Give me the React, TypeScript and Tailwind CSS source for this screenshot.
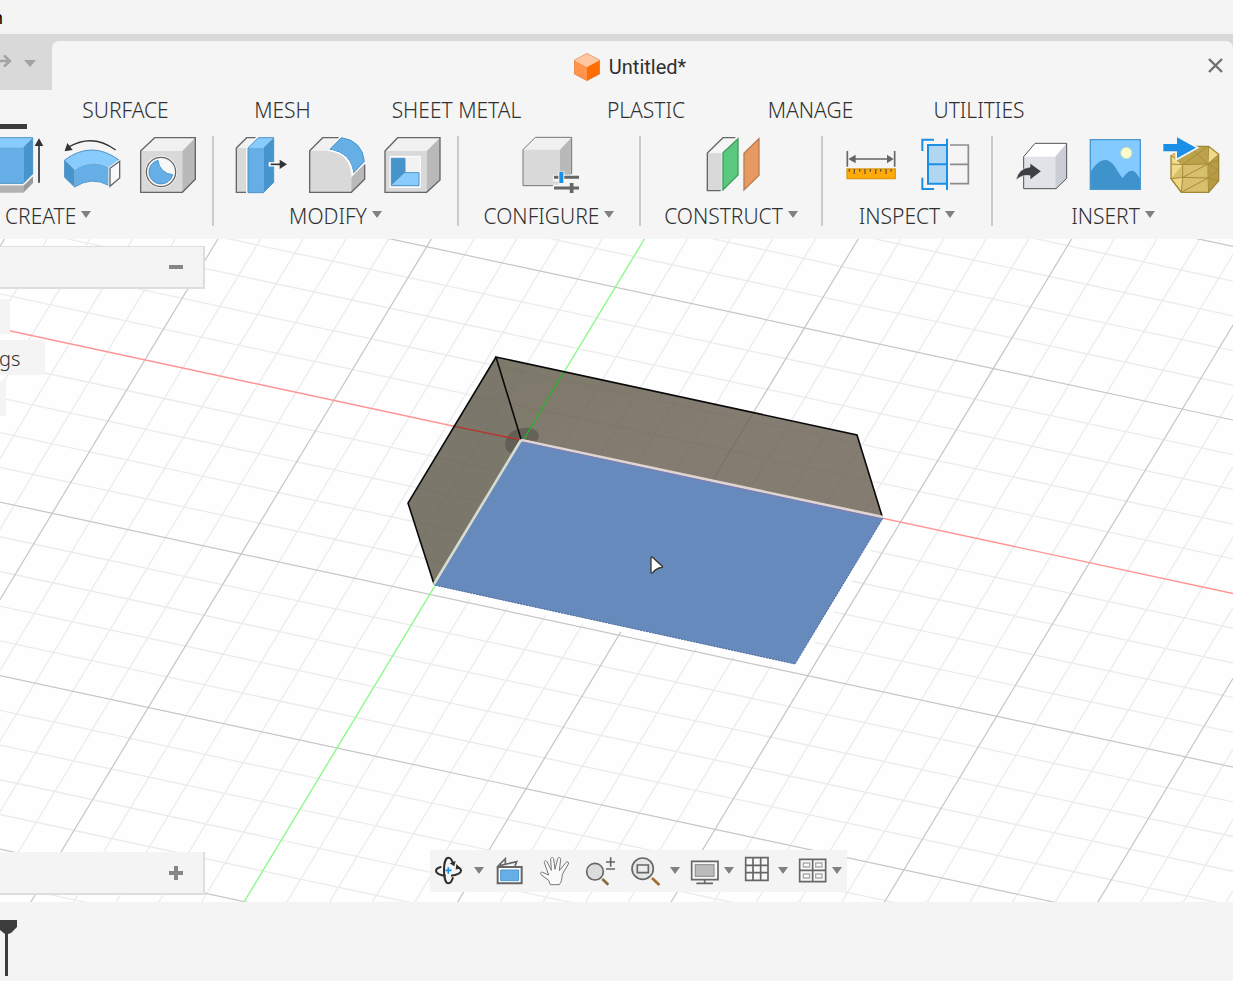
import type { ReactNode } from "react";

const O = { x: 522.8, y: 440.9 };
const U = { x: 188.9, y: 40.6 };
const V = { x: -92.8, y: 153.6 };

const steps = Array.from({ length: 81 }, (_, i) => i - 40);

function Caret({ className = "text-[#808080]" }: { className?: string }) {
  return (
    <svg viewBox="0 0 10 7" className={`h-[7px] w-[10px] shrink-0 ${className}`}>
      <path d="M0 0H10L5 7Z" fill="currentColor" />
    </svg>
  );
}

/* RIBBON ICONS */

function RibbonIcon({ label, box, children }: { label: string; box: string; children: ReactNode }) {
  return (
    <button type="button" aria-label={label} className="shrink-0">
      <svg viewBox={box} className="h-[60px] w-[60px] overflow-visible">
        {children}
      </svg>
    </button>
  );
}

function Extrude() {
  return (
    <RibbonIcon label="Extrude" box="-42 408 180 180">
      <path d="M-42 556H70V578H-42Z" fill="#b2b2b2" />
      <path d="M70 556L99 528V549L70 578Z" fill="#9a9a9a" />
      <path d="M-42 442L-12 413H98L70 442Z" fill="#88cbfd" />
      <path d="M-42 442H70V550H-42Z" fill="#66afe6" />
      <path d="M70 442L98 413V522L70 550Z" fill="#4794cd" />
      <path d="M-12 413H98V522L70 550H-42" fill="none" stroke="#4c93c6" strokeWidth="3" />
      <path d="M-42 554H71L99 526" fill="none" stroke="#f5f5f5" strokeWidth="4" />
      <path d="M117 548V432" stroke="#333" strokeWidth="5" />
      <path d="M104 438L117 415L130 438Z" fill="#333" />
    </RibbonIcon>
  );
}

function Bend() {
  return (
    <RibbonIcon label="Revolve" box="186 408 180 180">
      <path d="M347 450Q278 400 208 440" fill="none" stroke="#333" strokeWidth="4" />
      <path d="M194 454L202 429L218 450Z" fill="#333" />
      <path d="M194 480Q275 420 357 480L327 502Q275 474 224 509Z" fill="#88cbfd" />
      <path d="M224 509Q275 474 326 502V556Q275 528 224 561Z" fill="#66afe6" />
      <path d="M194 480L224 509V561L194 532Z" fill="#4794cd" />
      <path d="M194 532V480Q275 420 357 480M326 556Q275 528 224 561L194 532" fill="none" stroke="#4c93c6" strokeWidth="3" />
      <path d="M330 505L359 484V534L330 559Z" fill="none" stroke="#f5f5f5" strokeWidth="9" />
      <path d="M330 505L359 484V534L330 559Z" fill="#fafafa" stroke="#666" strokeWidth="4" />
    </RibbonIcon>
  );
}

function Hole() {
  return (
    <RibbonIcon label="Hole" box="414 408 180 180">
      <path d="M422 453L464 413H586L547 453Z" fill="#f1f1f1" />
      <path d="M422 453H547V577H422Z" fill="#d9d9d9" />
      <path d="M547 453L586 413V538L547 577Z" fill="#b9b9b9" />
      <path d="M422 453L464 413H586V538L547 577H422Z" fill="none" stroke="#666" strokeWidth="4" />
      <circle cx="483" cy="516" r="48" fill="#fff" />
      <circle cx="483" cy="516" r="44" fill="#f7f7f7" stroke="#666" strokeWidth="4" />
      <path d="M474 481A36 36 0 1 0 518 524A46 46 0 0 1 474 481Z" fill="#66afe6" stroke="#4794cd" strokeWidth="3" />
    </RibbonIcon>
  );
}

function PressPull() {
  return (
    <RibbonIcon label="Press Pull" box="31 138 180 180">
      <path d="M50 174H79V307H50Z" fill="#d9d9d9" />
      <path d="M50 174L81 143H108L79 174Z" fill="#f1f1f1" />
      <path d="M108 143H81L50 174V307H79" fill="none" stroke="#666" strokeWidth="4" />
      <path d="M82 310V173L114 141" fill="none" stroke="#fafafa" strokeWidth="5" />
      <path d="M85 173L116 143H162L131 173Z" fill="#88cbfd" />
      <path d="M85 173H131V308H85Z" fill="#66afe6" />
      <path d="M131 173L162 143V277L131 308Z" fill="#4794cd" />
      <path d="M85 173L116 143H162V277L131 308H85Z" fill="none" stroke="#4c93c6" strokeWidth="3" />
      <path d="M147 223H172" stroke="#fff" strokeWidth="13" />
      <path d="M153 223H184" stroke="#333" strokeWidth="5" />
      <path d="M180 209L202 223L180 237Z" fill="#333" />
    </RibbonIcon>
  );
}

function Fillet() {
  return (
    <RibbonIcon label="Fillet" box="259 138 180 180">
      <path d="M270 182L309 143H357L328 182Z" fill="#f1f1f1" />
      <path d="M270 182H330Q392 192 395 262V307H270Z" fill="#d9d9d9" />
      <path d="M395 262L435 222V268L395 307Z" fill="#b9b9b9" />
      <path d="M357 143H309L270 182V307H395L435 268V224" fill="none" stroke="#666" strokeWidth="4" />
      <path d="M331 178L365 143Q428 152 434 214L402 248Q395 188 331 178Z" fill="#66afe6" stroke="#4794cd" strokeWidth="3" />
      <path d="M326 181Q396 190 399 256" fill="none" stroke="#fff" strokeWidth="4" />
    </RibbonIcon>
  );
}

function Shell() {
  return (
    <RibbonIcon label="Shell" box="487 138 180 180">
      <path d="M496 183L534 143H661L621 183Z" fill="#f1f1f1" />
      <path d="M496 183H621V307H496Z" fill="#d9d9d9" />
      <path d="M621 183L661 143V270L621 307Z" fill="#b9b9b9" />
      <path d="M496 183L534 143H661V270L621 307H496Z" fill="none" stroke="#666" strokeWidth="4" />
      <path d="M511 199H602V292H511Z" fill="#f2f2f2" stroke="#fff" strokeWidth="3" />
      <path d="M515 205H556V248L515 287Z" fill="#4794cd" />
      <path d="M515 287L556 248H598V287Z" fill="#88cbfd" />
      <path d="M556 248V205H515V287H598V248Z" fill="none" stroke="#4c93c6" strokeWidth="3" />
    </RibbonIcon>
  );
}

function Configure() {
  return (
    <RibbonIcon label="Configure" box="57 288 180 180">
      <path d="M69 329L106 292H215L180 329Z" fill="#f1f1f1" />
      <path d="M69 329H180V437H69Z" fill="#d9d9d9" />
      <path d="M180 329L215 292V402L180 437Z" fill="#b9b9b9" />
      <path d="M180 437H69V329L106 292H215V402" fill="none" stroke="#777" strokeWidth="3" />
      <path d="M159 404H240V461H204V454H159V434H176V424H159Z" fill="#f5f5f5" />
      <path d="M162 412H237M162 444H237" stroke="#666" strokeWidth="9" />
      <path d="M184 395V430" stroke="#f5f5f5" strokeWidth="18" />
      <path d="M184 396V429" stroke="#1a8fe8" strokeWidth="12" />
      <path d="M215 429V459" stroke="#666" strokeWidth="11" />
    </RibbonIcon>
  );
}

function OffsetPlane() {
  return (
    <RibbonIcon label="Offset Plane" box="603 288 180 180">
      <path d="M622 339H665V452H622Z" fill="#d9d9d9" />
      <path d="M622 339L669 293H712L665 339Z" fill="#f5f5f5" />
      <path d="M706 293H669L622 339V452H662" fill="none" stroke="#666" strokeWidth="4" />
      <path d="M669 338L714 296V405L669 450Z" fill="#5bc880" stroke="#3f9e60" strokeWidth="4" />
      <path d="M732 340L777 296V406L732 450Z" fill="#e69a62" stroke="#bb7d50" strokeWidth="4" />
    </RibbonIcon>
  );
}

function Measure() {
  return (
    <RibbonIcon label="Measure" box="57 138 180 180">
      <path d="M82 183V230M224 183V230M100 207H208" stroke="#666" strokeWidth="5" />
      <path d="M85 207L107 194V220ZM221 207L201 194V220Z" fill="#666" />
      <path d="M81 237H226V266H81Z" fill="#ffa90a" stroke="#e09a12" strokeWidth="4" />
      <path
        d="M88 237V245M103 237V252M119 237V245M135 237V252M151 237V245M167 237V252M182 237V245M198 237V252M213 237V245"
        stroke="#6b5a36"
        strokeWidth="4"
      />
    </RibbonIcon>
  );
}

function Section() {
  return (
    <RibbonIcon label="Section Analysis" box="285 138 180 180">
      <path d="M390 165H445V281H390M390 223H445" fill="none" stroke="#8c8c8c" strokeWidth="5" />
      <path d="M324 165H381V281H324Z" fill="#b1d6f2" />
      <path d="M381 165H324V281H381M324 223H381M381 146V300M307 183V149H342M307 263V297H342" fill="none" stroke="#1a8fe8" strokeWidth="6" />
    </RibbonIcon>
  );
}

function Derive() {
  return (
    <RibbonIcon label="Insert Derive" box="561 138 180 180">
      <path d="M611 200L645 160H740L706 200Z" fill="#fff" />
      <path d="M611 200H706V296H611Z" fill="#e2e3e8" />
      <path d="M706 200L740 160V265L708 296H706Z" fill="#cbcdd6" />
      <path d="M611 200L645 160H740V265L708 296H611Z" fill="none" stroke="#505257" strokeWidth="3" />
      <path d="M588 271Q594 235 630 231V219L664 244L630 270V257Q605 253 588 271Z" fill="#3d4046" stroke="#f2f2f2" strokeWidth="2" />
    </RibbonIcon>
  );
}

function Canvas() {
  return (
    <RibbonIcon label="Canvas" box="789 138 180 180">
      <path d="M811 149H961V298H811Z" fill="#82caff" />
      <path d="M811 247C828 219 846 207 862 211C884 217 893 250 908 265C922 244 936 236 947 248L961 266V298H811Z" fill="#3f93cd" />
      <path d="M811 149H961V298H811Z" fill="none" stroke="#4b98d0" strokeWidth="4" />
      <circle cx="919" cy="189" r="17" fill="#fdfbcb" stroke="#c7d9c6" strokeWidth="3" />
    </RibbonIcon>
  );
}

function InsertMesh() {
  return (
    <RibbonIcon label="Insert Mesh" box="1017 138 180 180">
      <path d="M1080 169H1166L1196 193V272L1166 307H1084L1053 266V196Z" fill="#d8bf6c" />
      <path d="M1080 169H1166L1162 222L1088 224L1070 208Z" fill="#bda24c" />
      <path d="M1166 169L1196 193L1164 222Z" fill="#efd98b" />
      <path d="M1196 193V272L1166 307L1164 222Z" fill="#b79b45" />
      <path d="M1053 196L1088 224L1053 266Z" fill="#f0d988" />
      <path d="M1053 266L1088 262L1084 307Z" fill="#efd683" />
      <path
        d="M1053 222L1088 224L1164 222L1196 210M1053 266L1088 262L1164 264L1196 240M1088 224V262L1084 307M1164 222V264L1166 307M1088 224L1160 172M1088 262L1164 222M1084 307L1164 264M1088 224L1053 196M1164 222L1196 193M1166 169L1164 222M1164 264L1196 272M1164 222L1196 240M1110 172L1164 222M1053 266L1084 307"
        fill="none"
        stroke="#a58b3d"
        strokeWidth="3"
      />
      <path d="M1080 169H1166L1196 193V272L1166 307H1084L1053 266V196" fill="none" stroke="#a08639" strokeWidth="4" />
      <path d="M1030 162H1071V142L1128 173L1071 205V184H1030Z" fill="#1a8fe8" stroke="#f5f5f5" strokeWidth="10" paintOrder="stroke" />
    </RibbonIcon>
  );
}

/* NAVIGATION BAR */

function NavTool({ label, box, className = "", children }: { label: string; box: string; className?: string; children: ReactNode }) {
  return (
    <button type="button" aria-label={label} className={`shrink-0 ${className}`}>
      <svg viewBox={box} className="h-[42px] w-[30px]" fill="none" stroke="#666" strokeWidth="5">
        {children}
      </svg>
    </button>
  );
}

function NavCaret({ label }: { label: string }) {
  return (
    <button type="button" aria-label={label} className="flex h-[42px] w-[18px] shrink-0 items-center justify-center">
      <Caret className="-mt-px text-[#808080]" />
    </button>
  );
}

function NavigationBar() {
  return (
    <div role="toolbar" aria-label="Navigation" className="absolute bottom-[10px] left-[430px] flex gap-[6px] bg-[#f4f4f4] pl-1 pr-px">
      <NavTool label="Orbit" box="27 30 90 126">
        <g stroke="#2f2f2f" strokeWidth="6">
          <path d="M84 71C81 59 76 53 70 53C62 53 57 70 57 91C57 113 62 130 70 130C77 130 81 124 84 112" />
          <path d="M49 80C38 83 33 88 33 92C33 100 46 106 62 107M78 107C96 106 108 99 108 92C108 88 105 84 97 81" />
        </g>
        <path d="M74 70L92 63L88 79ZM92 89L94 72L106 84Z" fill="#2f2f2f" stroke="none" />
        <path d="M70 82V101M61 91H80" stroke="#1a8fe8" />
      </NavTool>
      <NavCaret label="Orbit options" />
      <NavTool label="Look At" box="207 30 90 126">
        <path d="M219 78L241 56V74M224 77L275 65L270 78" strokeWidth="5" />
        <path d="M218 81H290V130H218Z" fill="#fff" strokeWidth="6" />
        <path d="M227 90H281V122H227Z" fill="#66afe6" stroke="#4e9ad2" strokeWidth="3" />
      </NavTool>
      <NavTool label="Pan" box="345 30 90 126" className="ml-[10px]">
        <path
          d="M376 134L371 121L348 104C344 100 348 95 353 97L371 105L358 68C357 62 363 60 366 65L379 91L377 57C378 51 385 51 386 57L390 88L398 56C400 50 408 52 407 58L403 92L423 67C427 63 433 67 430 72L412 103C411 116 409 127 403 134Z"
          fill="#fafafa"
          stroke="#777"
          strokeWidth="3"
          strokeLinejoin="round"
        />
      </NavTool>
      <NavTool label="Zoom" box="480 30 90 126" className="ml-[9px]">
        <path d="M532 117L550 134" stroke="#8b683d" strokeWidth="8" />
        <circle cx="510" cy="95" r="25" fill="#dcdcdc" />
        <path d="M543 66H570M557 52V80M543 87H570" />
      </NavTool>
      <NavTool label="Fit" box="0 30 90 126" className="ml-[9px]">
        <path d="M66 114L88 135" stroke="#a06f2e" strokeWidth="8" />
        <circle cx="38" cy="86" r="32" fill="#e6e6e6" />
        <path d="M22 75H55V98H22Z" fill="#eee" />
      </NavTool>
      <NavCaret label="Fit options" />
      <div className="flex">
        <NavTool label="Display Settings" box="180 30 90 126">
          <path d="M185 64H264V119H185Z" fill="#f8f8f8" />
          <path d="M196 74H252V109H196Z" fill="#bbb" stroke="#999" strokeWidth="4" />
          <path d="M224 120V130M199 130H249" />
        </NavTool>
        <NavCaret label="Display options" />
      </div>
      <div className="flex">
        <NavTool label="Grid and Snaps" box="342 30 90 126">
          <path d="M347 53H414V121H347ZM369 53V121M392 53V121M347 76H414M347 98H414" fill="#f8f8f8" />
        </NavTool>
        <NavCaret label="Grid options" />
      </div>
      <div className="flex">
        <NavTool label="Viewports" box="504 30 90 126">
          <path d="M509 58H587V125H509ZM548 58V125M509 91H587" fill="#f8f8f8" />
          <path d="M520 69H539V81H520ZM557 69H576V81H557ZM520 102H539V114H520ZM557 102H576V114H557Z" stroke="#aaa" strokeWidth="4" />
        </NavTool>
        <NavCaret label="Viewport options" />
      </div>
    </div>
  );
}

/* VIEWPORT */

function GridLine({ i, along, offset }: { i: number; along: typeof U; offset: typeof U }) {
  const cx = O.x + (offset.x * i) / 5;
  const cy = O.y + (offset.y * i) / 5;
  return (
    <line
      x1={cx - along.x * 9}
      y1={cy - along.y * 9}
      x2={cx + along.x * 9}
      y2={cy + along.y * 9}
      stroke={i % 5 === 0 ? "#c6c6c6" : "#ebebeb"}
      strokeWidth={i % 5 === 0 ? 1.2 : 1.3}
    />
  );
}

function Scene() {
  const minor = steps.filter((i) => i % 5 !== 0);
  const major = steps.filter((i) => i % 5 === 0 && i !== 0);

  return (
    <svg viewBox="0 239 1233 663" preserveAspectRatio="xMidYMid slice" className="absolute inset-0 h-full w-full">
      <defs>
        <linearGradient id="wall" x1="0" y1="0" x2="1" y2="1">
          <stop offset="0" stopColor="#5c5845" />
          <stop offset="0.5" stopColor="#665b4e" />
          <stop offset="1" stopColor="#665b4e" />
        </linearGradient>
      </defs>

      {[...minor, ...major].map((i) => (
        <g key={i}>
          <GridLine i={i} along={U} offset={V} />
          <GridLine i={i} along={V} offset={U} />
        </g>
      ))}

      <path d="M434 585L795 664L883 518" fill="none" stroke="#fefefe" strokeWidth="12" />

      {/* Axes */}
      <path d="M0 328.7L1233 593.5" stroke="#ff9494" strokeWidth="1.4" />
      <path d="M645 238L244 902" stroke="#8cf98c" strokeWidth="1.4" />

      {/* Body */}
      <path d="M496 357L857 435L883 518L521 439Z" fill="url(#wall)" fillOpacity="0.8" />
      <path d="M496 357L521 439L434 585L408 503Z" fill="#5a5545" fillOpacity="0.8" />
      <path d="M505 445C505 431 520 427 531 428C540 431 541 438 536 441L521 440L511 453C507 451 505 449 505 445Z" fill="#333" fillOpacity="0.35" />
      <path d="M453 426L521 440" stroke="#c4302c" strokeWidth="1.2" />
      <path d="M563 373L524 439" stroke="#28b828" strokeWidth="1.2" />
      <path d="M521 439L496 357L857 435L882 516M496 357L408 503L434 584" fill="none" stroke="#0a0a0a" strokeWidth="1.6" />

      <path d="M521 439L883 518L795 664L434 585Z" fill="#668abc" />
      <path d="M883 518L795 664L434 585" fill="none" stroke="#47689b" strokeWidth="1" strokeDasharray="2 1" />
      <path d="M521 440L883 517" stroke="#dfd6d2" strokeWidth="2.6" />
      <path d="M521 440L434 584" stroke="#d8dbd0" strokeWidth="2.6" />
      <path d="M523 442L882 519" stroke="#8c78ad" strokeWidth="0.8" />

      {/* Cursor */}
      <path d="M651 557.5Q651.5 556.5 652.5 557.3L662.5 566.5Q663 567.3 661.5 567.5Q656.5 568 652.5 572.8Q651 573.5 651 572Z" fill="#fff" stroke="#333" strokeWidth="1.3" />
    </svg>
  );
}

const workspaces = [
  { name: "SURFACE", width: "w-[171px]" },
  { name: "MESH", width: "w-[143px]" },
  { name: "SHEET METAL", width: "w-[205px]" },
  { name: "PLASTIC", width: "w-[174px]" },
  { name: "MANAGE", width: "w-[155px]" },
  { name: "UTILITIES", width: "w-[182px]" },
];

const groups = [
  { name: "MODIFY", width: "w-[243px]", icons: [PressPull, Fillet, Shell] },
  { name: "CONFIGURE", width: "w-[180px]", icons: [Configure] },
  { name: "CONSTRUCT", width: "w-[180px]", icons: [OffsetPlane] },
  { name: "INSPECT", width: "w-[168px]", icons: [Measure, Section] },
  { name: "INSERT", width: "w-[240px]", icons: [Derive, Canvas, InsertMesh] },
];

function GroupLabel({ name }: { name: string }) {
  return (
    <button type="button" className="flex h-7 items-center gap-[5px] whitespace-nowrap">
      {name}
      <Caret className="-mt-1 text-[#808080]" />
    </button>
  );
}

export default function App() {
  return (
    <div className="flex min-h-screen flex-col overflow-hidden bg-[#f4f4f4] font-['Noto_Sans',sans-serif] text-[21px] leading-7 text-[#303030]">

      {/* Title bar */}
      <header className="flex h-[34px] items-center bg-[#f3f3f3]">
        <span className="-ml-2 text-[18px] text-black">n</span>
      </header>

      {/* Document tab */}
      <div className="flex h-14 bg-[#d9d9d9] pt-[7px]">
        <div className="flex w-[52px] shrink-0 items-center justify-between pb-[10px] pr-4">
          <button type="button" aria-label="Redo">
            <svg viewBox="0 0 12 14" className="h-[14px] w-3" fill="none" stroke="#a3a3a3" strokeWidth="2.4">
              <path d="M0 7H10M4 1.5L10 7L4 12.5" />
            </svg>
          </button>
          <button type="button" aria-label="History" className="pt-[6px]">
            <svg viewBox="0 0 12 7" className="h-[7px] w-3">
              <path d="M0 0H12L6 7Z" fill="#a3a3a3" />
            </svg>
          </button>
        </div>
        <div className="flex min-w-0 flex-1 items-center rounded-t-[7px] bg-[#f5f5f5]">
          <div className="flex flex-1 items-center justify-center gap-[9px] pt-[2px] font-['Roboto',sans-serif] text-[20px]">
            <svg viewBox="0 0 26 28" className="h-7 w-[26px]">
              <path d="M13 0L26 7L13 14L0 7Z" fill="#ffc7a0" />
              <path d="M0 7L13 14V28L0 21Z" fill="#ff944a" />
              <path d="M26 7L13 14V28L26 21Z" fill="#ff6d05" />
              <path d="M13 0.5L25.5 7V21L13 27.5L0.5 21V7Z" fill="none" stroke="#d98a58" strokeOpacity="0.6" />
            </svg>
            <span>Untitled*</span>
          </div>
          <button type="button" aria-label="Close" className="mr-[10px]">
            <svg viewBox="0 0 15 15" className="h-[15px] w-[15px]" stroke="#707070" strokeWidth="2.4">
              <path d="M1 1L14 14M14 1L1 14" />
            </svg>
          </button>
        </div>
      </div>

      {/* Ribbon */}
      <nav className="flex h-10 shrink-0 bg-[#f5f5f5] font-light">
        <div className="flex w-10 shrink-0 items-end pb-px">
          <span className="h-[5px] w-[27px] bg-[#3c3c3c]" />
        </div>
        {workspaces.map((tab) => (
          <button key={tab.name} type="button" className={`shrink-0 whitespace-nowrap ${tab.width}`}>
            {tab.name}
          </button>
        ))}
      </nav>

      <div className="flex h-[109px] shrink-0 bg-[#f5f5f5] pt-[6px] font-light">
        <section className="flex w-[212px] shrink-0 flex-col gap-[6px]">
          <div className="flex justify-end gap-4 pr-[14px]">
            <Extrude />
            <Bend />
            <Hole />
          </div>
          <div className="pl-[5px]">
            <GroupLabel name="CREATE" />
          </div>
        </section>
        {groups.map((group) => (
          <div key={group.name} className="flex shrink-0">
            <div className="h-[90px] w-[2px] bg-[#cbcbcb]" />
            <section className={`flex flex-col items-center gap-[6px] ${group.width}`}>
              <div className="flex gap-4">
                {group.icons.map((Icon, i) => (
                  <Icon key={i} />
                ))}
              </div>
              <GroupLabel name={group.name} />
            </section>
          </div>
        ))}
      </div>

      {/* Viewport */}
      <main className="relative flex-1 overflow-hidden bg-[#fefefe]">
        <Scene />

        <div className="absolute left-0 top-[7px] flex flex-col items-start">
          <div className="flex h-[43px] w-[205px] items-center justify-end border-b-2 border-r-2 border-t border-[#dedede] bg-[#f4f4f4] pr-5">
            <button type="button" aria-label="Collapse browser" className="flex h-6 items-center">
              <span className="h-1 w-[14px] bg-[#868686]" />
            </button>
          </div>
          <div className="mt-[10px] h-[35px] w-[10px] bg-[#f4f4f4]" />
          <div className="mt-[6px] flex h-[35px] w-[45px] items-center bg-[#f4f4f4] pt-[2px] text-[20px]">
            <span className="-ml-px font-light">gs</span>
          </div>
          <div className="mt-[6px] h-[35px] w-[6px] bg-[#f4f4f4]" />
        </div>

        <div className="absolute bottom-[7px] left-0 flex h-[43px] w-[205px] items-center justify-end border-b-2 border-r-2 border-[#dedede] bg-[#f4f4f4] pr-5">
          <button type="button" aria-label="Expand comments">
            <svg viewBox="0 0 14 14" className="h-[14px] w-[14px]" stroke="#868686" strokeWidth="4">
              <path d="M7 0V14M0 7H14" />
            </svg>
          </button>
        </div>

        <NavigationBar />
      </main>

      {/* Timeline */}
      <footer className="h-[79px] shrink-0 bg-[#f4f4f4] pt-[18px]">
        <svg viewBox="0 0 17 56" className="h-14 w-[17px]" fill="#3c3c3c">
          <path d="M0 0H17V7L11 13L8 14V56H5V14L0 10Z" />
        </svg>
      </footer>

    </div>
  );
}
